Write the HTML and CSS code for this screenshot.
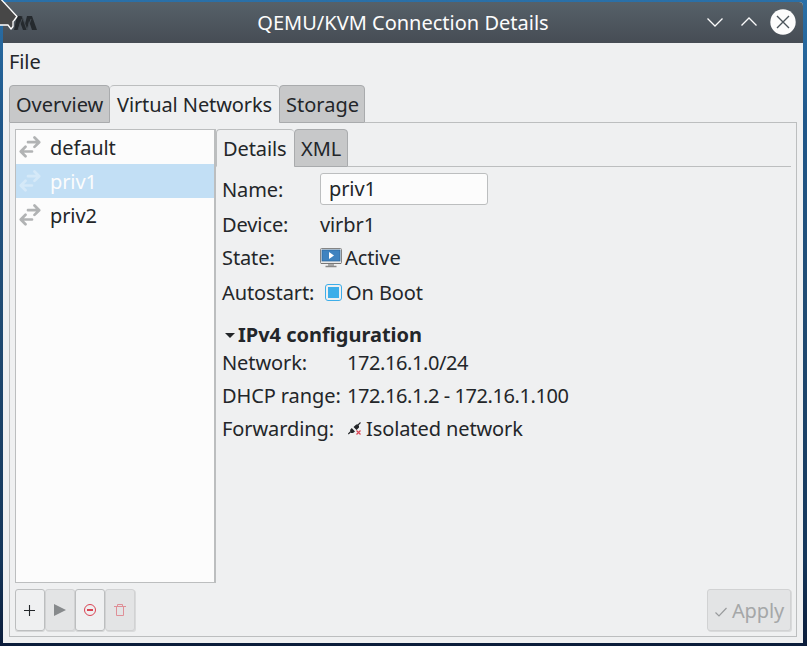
FILE: index.html
```html
<!DOCTYPE html>
<html lang="en">
<head>
<meta charset="utf-8">
<title>QEMU/KVM Connection Details</title>
<link rel="stylesheet" href="styles.css">
</head>
<body>
<svg class="symbols" aria-hidden="true">
  <symbol id="net" viewBox="0 0 22 22">
    <path d="M9 6.200h10M15.500 1.500l4.700 4.700-4.700 4.700M13 15.500H3M6.500 10.800l-4.700 4.700 4.700 4.700" fill="none" stroke="currentColor" stroke-width="2.700" stroke-linecap="round" stroke-linejoin="round"/>
  </symbol>
</svg>
<main class="window">
  <header class="titlebar">
    <svg class="app-icon" width="24" height="16" viewBox="0 0 24 16"><path d="M0 15L3 1h5l3 8 2-8h5l5 14h-5l-3-9-2 9H9L6 7l-2 8z" fill="#252a2e"/><path d="M8 1l5 14M4 15L8 4M13 15l4-11" stroke="#454d53" stroke-width="1" fill="none"/></svg>
    <h1 class="title">QEMU/KVM Connection Details</h1>
    <svg class="controls" width="92" height="28" viewBox="0 0 92 28">
      <path d="M2.500 10.500l7.500 7.500 7.500-7.500M36.500 17.500l7.500-7.500 7.500 7.500" fill="none" stroke="#fcfcfc" stroke-width="1.300"/>
      <circle cx="78" cy="14" r="12.700" fill="#fcfcfc"/>
      <path d="M72 8l12 12M84 8L72 20" stroke="#4b545b" stroke-width="1.400"/>
    </svg>
  </header>
  <nav class="menubar">File</nav>
  <div class="tabs outer-tabs">
    <div class="tab overview">Overview</div>
    <div class="tab active networks">Virtual Networks</div>
    <div class="tab storage">Storage</div>
    <div class="tab-line"></div>
  </div>
  <section class="notebook">
    <div class="split">
      <ul class="list">
        <li><svg class="net"><use href="#net"/></svg>default</li>
        <li class="selected"><svg class="net"><use href="#net"/></svg>priv1</li>
        <li><svg class="net"><use href="#net"/></svg>priv2</li>
      </ul>
      <div class="details">
        <div class="tabs inner-tabs">
          <div class="tab active details-tab">Details</div>
          <div class="tab xml">XML</div>
          <div class="tab-line"></div>
        </div>
        <div class="row name"><span class="label">Name:</span><span class="entry">priv1</span></div>
        <div class="row"><span class="label">Device:</span><span>virbr1</span></div>
        <div class="row"><span class="label">State:</span>
          <svg class="monitor" width="22" height="20" viewBox="0 0 22 20"><rect x=".5" y=".5" width="21" height="15" rx="1" fill="#e8e8e8" stroke="#858585"/><rect x="2" y="2" width="18" height="11" fill="#3f83c0" stroke="#28649b" stroke-width=".7"/><path d="M9 4v7l5-3.500z" fill="#fff"/><path d="M1 15.500h20" stroke="#777"/><path d="M8 16h6v2H8z" fill="#aaa"/><path d="M5.500 18.500h11" stroke="#888" stroke-width="1.500"/></svg>
          <span>Active</span></div>
        <div class="row autostart"><span class="label">Autostart:</span><span class="checkbox"></span><span>On Boot</span></div>
        <h2 class="expander"><svg width="10" height="5" viewBox="0 0 10 5"><path d="M0 0h10L5 5z" fill="#232629"/></svg>IPv4 configuration</h2>
        <div class="row wide"><span class="label">Network:</span><span class="address">172.16.1.0/24</span></div>
        <div class="row wide"><span class="label">DHCP range:</span><span class="address">172.16.1.2 - 172.16.1.100</span></div>
        <div class="row wide"><span class="label">Forwarding:</span>
          <svg class="plug" width="14" height="14" viewBox="0 0 14 14"><path d="M0.300 12l2.500-2.500M9.500 3.500l3-3" stroke="#232629" stroke-width="1.100"/><path d="M2 8l1.800-2L7 9.500 5 11H3zM5.500 5l2.800-2.500h1.500L11 4v1.500L8.500 8z" fill="#232629"/><path d="M8.500 8.500l4 4M12.500 8.500l-4 4" stroke="#da4453" stroke-width="1.200"/></svg>
          <span>Isolated network</span></div>
      </div>
    </div>
    <footer class="actions">
      <div class="button"><svg width="16" height="16" viewBox="0 0 16 16"><path d="M2 8.500h11M7.500 3v11" stroke="#232629" stroke-width="1.100"/></svg></div>
      <div class="button disabled"><svg width="16" height="16" viewBox="0 0 16 16"><path d="M2 2v12l12-6z" fill="#878a8c"/></svg></div>
      <div class="button"><svg width="16" height="16" viewBox="0 0 16 16"><circle cx="8" cy="8" r="5.500" fill="none" stroke="#da4453"/><path d="M5 8h6" stroke="#da4453" stroke-width="2"/></svg></div>
      <div class="button disabled"><svg width="16" height="16" viewBox="0 0 16 16"><path d="M2 4.500h12M5.500 4V2.500h5V4M4.500 5v8.500h7V5" fill="none" stroke="#df8f97"/></svg></div>
      <div class="button disabled apply"><svg width="12" height="10" viewBox="0 0 12 10"><path d="M.5 5.500l3.500 3.500L11.500 1" fill="none" stroke="#999b9d" stroke-width="1.200"/></svg>Apply</div>
    </footer>
  </section>
</main>
<svg class="cursor" width="20" height="32" viewBox="0 0 20 32"><path d="M-2-4L17 16.500 14 20.500l-1 1v5l-2 2.500-3-4H-2z" fill="#474747" stroke="#fff" stroke-width="1.300" stroke-linejoin="round"/></svg>
</body>
</html>
```
FILE: styles.css
```css
* { box-sizing: border-box; }
body {
  margin: 0;
  height: 646px;
  padding: 2px 4px 3px 3px;
  overflow: hidden;
  background: linear-gradient(#2a70a8 0, #1f578a 120px, #204c74 300px, #14365a 560px, #0b1c3a 646px);
  font: 20px/24px "Noto Sans", sans-serif;
  letter-spacing: -0.1px;
  color: #232629;
}
svg { display: block; flex: none; }
.symbols { position: absolute; width: 0; height: 0; }
.window {
  display: flex;
  flex-direction: column;
  height: 641px;
  background: #eff0f1;
  border-radius: 4px 4px 0 0;
  overflow: hidden;
}
.titlebar {
  display: grid;
  grid-template-columns: 105px 1fr 105px;
  align-items: center;
  height: 41px;
  background: linear-gradient(#566169, #464c54);
  color: #fcfcfc;
}
.app-icon { margin-left: 11px; }
.title { margin: 0; font-size: 20px; font-weight: 400; line-height: 24px; letter-spacing: 0; text-align: center; white-space: nowrap; }
.controls { margin: -1px 0 0 7px; }
.menubar { height: 42px; padding: 7px 6px 0; }
.tabs { display: flex; height: 38px; }
.tab {
  flex: none;
  padding: 7px 0 0 6px;
  border: 1px solid #a9abad;
  border-radius: 4px 4px 0 0;
  background: #c7c8c9;
  white-space: nowrap;
}
.tab.active { background: #eff0f1; border-color: #bcbebf; border-bottom-color: transparent; }
.tab-line { flex: 1; border-bottom: 1px solid #bcbebf; }
.outer-tabs { margin: 0 6px; }
.overview { width: 101px; letter-spacing: 0; }
.tab.networks { width: 169px; padding-left: 7px; border-right: 0; border-left: 0; }
.storage { width: 86px; letter-spacing: 0; }
.notebook {
  height: 514px;
  margin: 0 6px;
  padding: 6px 5px 0;
  border: 1px solid #bcbebf;
  border-top: 0;
}
.split { display: flex; height: 454px; }
.list {
  width: 201px;
  margin: 0;
  padding: 0;
  list-style: none;
  background: #fcfcfc;
  border: 1px solid #bcbebf;
  border-right-width: 2px;
}
.list li { display: flex; height: 34px; padding: 6px 0 0 3px; }
.net { width: 22px; height: 22px; margin: 0 9px 0 0; color: #b1b3b4; }
.selected { background: #c2dff5; color: #fcfcfc; }
.selected .net { color: #d5e9f8; }
.details { flex: 1; }
.details-tab { width: 78px; border-right: 0; }
.xml { width: 54px; letter-spacing: 0; }
.row { display: flex; align-items: center; height: 33px; padding-left: 6px; white-space: nowrap; }
.label { width: 98px; flex: none; }
.wide .label { width: 125px; }
.address { letter-spacing: -0.42px; }
.name { height: 32px; margin: 6px 0 3px; }
.name .label { padding-top: 2px; }
.entry {
  width: 168px;
  height: 32px;
  padding: 3px 8px;
  border: 1px solid #bcbebf;
  border-radius: 3px;
  background: #fcfcfc;
}
.monitor { margin-right: 3px; }
.autostart { margin-top: 2px; }
.checkbox {
  width: 17px;
  height: 17px;
  margin: 0 4px 0 5px;
  border: 1px solid #3daee9;
  border-radius: 3px;
  padding: 2px;
  background: #3daee9 content-box;
}
.expander { display: flex; align-items: center; gap: 3px; margin: 14px 0 -1px; padding-left: 9px; font-size: 20px; font-weight: 700; line-height: 24px; letter-spacing: 0; }
.plug { margin: 0 4px 0 1px; }
.actions { display: flex; margin-top: 6px; }
.button {
  display: flex;
  align-items: center;
  justify-content: center;
  width: 30px;
  height: 42px;
  border: 1px solid #bcbebf;
  border-radius: 3px;
  box-shadow: 0 1px 0 #d5d6d7;
}
.disabled { background: #e3e4e5; border-color: #d1d2d3; box-shadow: 1px 1px 0 #d9dadb; }
.apply { width: 84px; margin-left: auto; padding: 2px 0 0 1px; gap: 5px; color: #a5a7a8; }
.apply svg { margin-top: 2px; }
.cursor { position: absolute; left: 0; top: 0; }
```
